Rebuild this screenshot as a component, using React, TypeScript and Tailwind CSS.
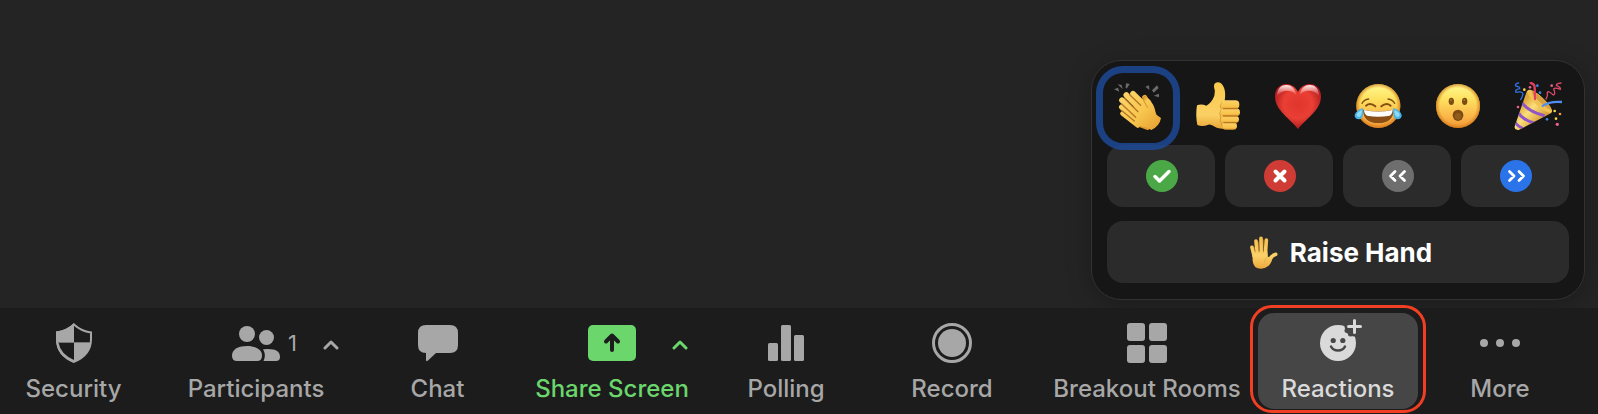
import type { ReactNode } from 'react';

/* ---------- Emoji drawings ---------- */

const EMOJI = 'h-[52px] w-12';

function Clap() {
  return (
    <svg viewBox="0 0 144 156" className={EMOJI} aria-hidden="true">
      <defs>
        <linearGradient id="clapSkin" x1="20" y1="40" x2="120" y2="140" gradientUnits="userSpaceOnUse">
          <stop offset="0" stopColor="#fbd46b" />
          <stop offset="0.55" stopColor="#f8c750" />
          <stop offset="1" stopColor="#e8a634" />
        </linearGradient>
      </defs>
      <g fill="#6b6b6b">
        <path d="M11 7l12 2 3 13z" />
        <path d="M36 4l11 2-9 14-3-4z" />
        <path d="M0 22l12-5 4 12z" />
        <path d="M94 14l11-4 1 14z" />
        <path d="M114 25l15-15 5 8-15 14z" />
        <path d="M119 41l16-6 0 11z" />
      </g>
      <g strokeLinecap="round" fill="none">
        <path d="M92 46l16 26 12 28" stroke="#e9a93a" strokeWidth="15" />
        <path d="M76 128l24 9" stroke="#dd9a2e" strokeWidth="14" />
        <g stroke="url(#clapSkin)">
          <path d="M57 35l52 52" strokeWidth="17" />
          <path d="M37 39l58 58" strokeWidth="17" />
          <path d="M24 55l58 58" strokeWidth="17" />
          <path d="M23 75l50 46" strokeWidth="16" />
          <path d="M25 95l46 36" strokeWidth="13" />
        </g>
      </g>
      <path d="M64 38L90 55 Q97 60 97 49 Q105 47 112 60 Q124 76 125 97 L141 108 Q137 132 112 144 L95 136 Q78 134 65 120 L55 96z" fill="url(#clapSkin)" />
      <path d="M94 44Q85 43 89 56L101 77" stroke="#d38f28" strokeWidth="3" fill="none" />
      <g stroke="#b67720" strokeWidth="4" strokeLinecap="round">
        <path d="M47 38l33 32" />
        <path d="M31 48l41 41" />
        <path d="M23 66l42 40" />
        <path d="M22 85l39 32" />
      </g>
    </svg>
  );
}

function ThumbsUp() {
  return (
    <svg viewBox="0 0 144 156" className={EMOJI} aria-hidden="true">
      <defs>
        <linearGradient id="thumbSkin" x1="0" y1="0" x2="0" y2="1">
          <stop offset="0" stopColor="#fac94d" />
          <stop offset="0.7" stopColor="#fbd064" />
          <stop offset="1" stopColor="#e9a536" />
        </linearGradient>
        <linearGradient id="thumbFinger" x1="0" y1="0" x2="0" y2="1">
          <stop offset="0" stopColor="#fcd168" />
          <stop offset="0.7" stopColor="#f8c34b" />
          <stop offset="1" stopColor="#dd992e" />
        </linearGradient>
      </defs>
      <path
        d="M9 70Q22 65 37 71Q54 61 61 41Q65 27 60 15Q59 2 71 1Q83 1 90 17Q96 31 92 56L108 60L106 141Q73 143 60 133Q50 126 43 128Q25 136 10 129Q4 100 9 70z"
        fill="url(#thumbSkin)"
      />
      <path d="M84 60Q76 73 82 83Q73 95 81 105Q75 117 83 125Q83 135 90 142" fill="none" stroke="#d49632" strokeWidth="3" />
      <g fill="url(#thumbFinger)">
        <rect x="82" y="55" width="54" height="26" rx="12" />
        <rect x="80" y="79" width="58" height="24" rx="12" />
        <rect x="82" y="101" width="53" height="22" rx="11" />
        <rect x="85" y="121" width="44" height="22" rx="11" />
      </g>
      <g fill="none" stroke="#b97820" strokeWidth="4" strokeLinecap="round">
        <path d="M88 80h42M88 102h42M90 122h36" />
      </g>
    </svg>
  );
}

function Heart() {
  return (
    <svg viewBox="0 0 144 156" className={EMOJI} aria-hidden="true">
      <defs>
        <radialGradient id="heartFill" cx="72" cy="66" r="80" gradientUnits="userSpaceOnUse">
          <stop offset="0" stopColor="#e0352d" />
          <stop offset="0.55" stopColor="#e93f34" />
          <stop offset="1" stopColor="#a8151b" />
        </radialGradient>
        <linearGradient id="heartShine" x1="0" y1="0" x2="0" y2="1">
          <stop offset="0" stopColor="#fff" stopOpacity="0.95" />
          <stop offset="1" stopColor="#ffaca6" stopOpacity="0.15" />
        </linearGradient>
      </defs>
      <path
        d="M72 141C52 113 3 87 3 43C3 20 18 6 37 6C54 6 66 17 72 30C78 17 90 6 107 6C126 6 141 20 141 43C141 87 92 113 72 141z"
        fill="url(#heartFill)"
      />
      <path d="M9 42C9 18 23 9 37 9C53 9 62 19 67 38C52 22 24 22 9 42z" fill="url(#heartShine)" />
      <path d="M135 42C135 18 121 9 107 9C91 9 82 19 77 38C92 22 120 22 135 42z" fill="url(#heartShine)" />
    </svg>
  );
}

function FaceGradients({ id }: { id: string }) {
  return (
    <defs>
      <linearGradient id={id} x1="0" y1="0" x2="0" y2="1">
        <stop offset="0" stopColor="#fffa90" />
        <stop offset="0.35" stopColor="#fee05f" />
        <stop offset="0.75" stopColor="#fab548" />
        <stop offset="1" stopColor="#ef9636" />
      </linearGradient>
      <radialGradient id={`${id}Edge`}>
        <stop offset="0.82" stopColor="#d87918" stopOpacity="0" />
        <stop offset="1" stopColor="#c9700f" stopOpacity="0.7" />
      </radialGradient>
    </defs>
  );
}

function Joy() {
  return (
    <svg viewBox="0 0 144 156" className={EMOJI} aria-hidden="true">
      <FaceGradients id="joyFace" />
      <circle cx="73" cy="72" r="66" fill="url(#joyFace)" />
      <circle cx="73" cy="72" r="66" fill="url(#joyFaceEdge)" />
      <g fill="none" stroke="#835014" strokeLinecap="round">
        <path d="M24 64Q30 53 44 51M102 51Q116 53 122 64" strokeWidth="4" />
        <path d="M36 71Q49 60 64 73M82 73Q97 60 110 71" strokeWidth="6" />
      </g>
      <path d="M27 83Q73 92 119 83Q118 123 73 123Q28 123 27 83z" fill="#8a4f14" />
      <path d="M30 84Q73 93 116 84Q115 97 107 101Q73 107 39 101Q31 97 30 84z" fill="#fff" />
      <path d="M27 78Q31 112 15 112Q1 111 2 99Q6 85 27 78z" fill="#4bb2e8" />
      <path d="M24 83Q24 102 15 105Q7 104 8 97Q12 88 24 83z" fill="#8cdcf8" />
      <path d="M118 78Q114 112 130 112Q144 111 143 99Q139 85 118 78z" fill="#4bb2e8" />
      <path d="M121 83Q121 102 130 105Q138 104 137 97Q133 88 121 83z" fill="#8cdcf8" />
    </svg>
  );
}

function Wow() {
  return (
    <svg viewBox="0 0 144 156" className={EMOJI} aria-hidden="true">
      <FaceGradients id="wowFace" />
      <circle cx="72" cy="72" r="66" fill="url(#wowFace)" />
      <circle cx="72" cy="72" r="66" fill="url(#wowFaceEdge)" />
      <g fill="#7b4b12">
        <ellipse cx="52" cy="58" rx="8" ry="11" />
        <ellipse cx="92" cy="58" rx="8" ry="11" />
        <ellipse cx="72" cy="100" rx="16" ry="17" />
      </g>
      <ellipse cx="72" cy="103" rx="10" ry="10" fill="#8f5d1b" />
      <g fill="#a9763a">
        <circle cx="51" cy="54" r="3" />
        <circle cx="91" cy="54" r="3" />
      </g>
    </svg>
  );
}

function Party() {
  return (
    <svg viewBox="0 0 144 156" className={EMOJI} aria-hidden="true">
      <defs>
        <linearGradient id="cone" x1="14" y1="76" x2="72" y2="128" gradientUnits="userSpaceOnUse">
          <stop offset="0" stopColor="#dfa83a" />
          <stop offset="0.4" stopColor="#fbdf7c" />
          <stop offset="1" stopColor="#d69c34" />
        </linearGradient>
        <clipPath id="coneShape">
          <path d="M39 26L1 136Q4 147 16 143L112 93Q92 82 78 60z" />
        </clipPath>
      </defs>
      <g clipPath="url(#coneShape)">
        <rect width="144" height="156" fill="url(#cone)" />
        <g fill="none" stroke="#9155c6" strokeWidth="9">
          <path d="M22 58Q38 88 92 101" />
          <path d="M10 88Q24 114 64 124" />
          <path d="M0 116Q8 132 28 140" />
        </g>
      </g>
      <ellipse cx="77" cy="58" rx="49" ry="14" transform="rotate(43 77 58)" fill="#f0c253" />
      <ellipse cx="82" cy="55" rx="39" ry="7" transform="rotate(43 82 55)" fill="#d9a040" />
      <g fill="none" strokeLinecap="round">
        <path d="M14 3Q2 5 5 12Q19 14 17 20Q1 23 6 31Q27 27 27 36Q25 45 20 53" stroke="#2f6fe0" strokeWidth="4" />
        <path d="M50 3Q62 5 62 17L63 51" stroke="#e0405e" strokeWidth="7" />
        <path d="M141 3Q126 5 127 10Q142 17 139 22Q122 16 119 21Q126 38 118 39Q103 25 100 31Q102 43 96 51" stroke="#e0486a" strokeWidth="4" />
        <path d="M84 73Q105 57 144 60" stroke="#4d8ef0" strokeWidth="7" strokeLinecap="butt" />
      </g>
      <g fill="#ee5f8b">
        <circle cx="48" cy="16" r="4" />
        <circle cx="113" cy="11" r="4" />
        <circle cx="12" cy="75" r="4" />
        <circle cx="130" cy="127" r="5" />
      </g>
      <g fill="#3c82ee">
        <circle cx="70" cy="11" r="4" />
        <circle cx="78" cy="32" r="4" />
        <circle cx="99" cy="112" r="4" />
      </g>
      <g fill="#f7d64a">
        <circle cx="31" cy="23" r="4" />
        <circle cx="122" cy="87" r="4" />
        <circle cx="126" cy="110" r="4" />
      </g>
      <circle cx="138" cy="96" r="4" fill="#f09a3c" />
    </svg>
  );
}

function RaisedHand() {
  return (
    <svg viewBox="0 0 84 99" className="h-[33px] w-7" aria-hidden="true">
      <defs>
        <linearGradient id="handSkin" x1="0" y1="0" x2="0" y2="99" gradientUnits="userSpaceOnUse">
          <stop offset="0" stopColor="#f5bd4a" />
          <stop offset="0.6" stopColor="#fbd168" />
          <stop offset="1" stopColor="#eca63a" />
        </linearGradient>
      </defs>
      <g stroke="url(#handSkin)" strokeWidth="11" strokeLinecap="round" fill="none">
        <path d="M6 34L13 62" />
        <path d="M18 15L22 56" />
        <path d="M33 7L34 54" />
        <path d="M49 12L46 56" />
        <path d="M77 55Q66 58 59 71L52 82" />
      </g>
      <path d="M7 48L16 46L52 46L54 63Q60 64 68 58L66 72Q58 98 33 98Q10 98 8 74z" fill="url(#handSkin)" />
      <g stroke="#c78527" strokeWidth="2" strokeLinecap="round" fill="none">
        <path d="M13 34L16 48M25 18L27 48M40 12L40 48" />
        <path d="M54 62Q45 66 43 78" strokeOpacity="0.5" />
      </g>
    </svg>
  );
}

/* ---------- Toolbar icons ---------- */

function SecurityIcon() {
  return (
    <svg viewBox="0 0 36 40" className="h-10 w-9" fill="currentColor" aria-hidden="true">
      <path d="M18 0Q11 7 0 8.500V16Q0 33 18 40z" />
      <path
        d="M18 1.400Q25 8 35 9.400V16Q35 32 18 38.800Q1 32 1 16V9.400Q11 8 18 1.400z"
        fill="none"
        stroke="currentColor"
        strokeWidth="2"
      />
      <path d="M2.600 20H18V37Q4.500 31 2.600 20z" fill="#1c1c1c" />
      <path d="M18 19.500H35Q33.500 33 18 39z" />
      <path d="M2 19.500H34" stroke="#777" strokeWidth="1" />
    </svg>
  );
}

function ParticipantsIcon() {
  return (
    <svg viewBox="0 0 48 40" className="h-10 w-12" fill="currentColor" aria-hidden="true">
      <circle cx="15" cy="11" r="8" />
      <circle cx="34.500" cy="14.500" r="7.500" />
      <path d="M0 32.500C0 26 7 23 15 23S30 26 30 32.500Q30 38 25 38H5Q0 38 0 32.500z" />
      <path d="M31 26.300Q48 24.500 48 34Q48 38 44 38H31.500Q34.500 32 31 26.300z" />
    </svg>
  );
}

function ChatIcon() {
  return (
    <svg viewBox="0 0 40 40" className="size-10" fill="currentColor" aria-hidden="true">
      <path d="M8 2H32Q40 2 40 10V22Q40 30 32 30H18L10 37.500Q8 39 8 37V30Q0 30 0 22V10Q0 2 8 2z" />
    </svg>
  );
}

function ShareIcon() {
  return (
    <svg viewBox="0 0 48 40" className="h-10 w-12" aria-hidden="true">
      <rect y="2" width="48" height="36" rx="5" fill="currentColor" />
      <path
        d="M24 27V12.500M18 18.500L24 12.500L30 18.500"
        fill="none"
        stroke="#1c1c1c"
        strokeWidth="4"
        strokeLinecap="round"
        strokeLinejoin="round"
      />
    </svg>
  );
}

function PollingIcon() {
  return (
    <svg viewBox="0 0 36 40" className="h-10 w-9" fill="currentColor" aria-hidden="true">
      <rect y="20" width="10" height="18" rx="1.500" />
      <rect x="13" y="2" width="10" height="36" rx="1.500" />
      <rect x="26" y="12" width="10" height="26" rx="1.500" />
    </svg>
  );
}

function RecordIcon() {
  return (
    <svg viewBox="0 0 40 40" className="size-10" fill="currentColor" aria-hidden="true">
      <circle cx="20" cy="20" r="18.500" fill="none" stroke="currentColor" strokeWidth="3" />
      <circle cx="20" cy="20" r="14" />
    </svg>
  );
}

function BreakoutIcon() {
  return (
    <svg viewBox="0 0 40 40" className="size-10" fill="currentColor" aria-hidden="true">
      <rect width="18" height="18" rx="3" />
      <rect x="22" width="18" height="18" rx="3" />
      <rect y="22" width="18" height="18" rx="3" />
      <rect x="22" y="22" width="18" height="18" rx="3" />
    </svg>
  );
}

function ReactionsIcon() {
  return (
    <svg viewBox="0 0 36 40" className="h-10 w-9 overflow-visible" fill="none" strokeLinecap="round" aria-hidden="true">
      <circle cx="18" cy="20" r="18" fill="currentColor" />
      <circle cx="34.500" cy="3.500" r="10" fill="#464646" />
      <circle cx="27" cy="7.500" r="2.500" fill="#464646" />
      <circle cx="30.500" cy="11" r="2.500" fill="#464646" />
      <path d="M34.500 -2.500V9.500M28.500 3.500H40.500" stroke="currentColor" strokeWidth="3" />
      <circle cx="13.200" cy="17.500" r="2.600" fill="#464646" />
      <circle cx="22.800" cy="17.500" r="2.600" fill="#464646" />
      <path d="M11 23.500Q13 27.500 18 27.500T25 23.500" stroke="#464646" strokeWidth="2.500" />
    </svg>
  );
}

function MoreIcon() {
  return (
    <svg viewBox="0 0 40 40" className="size-10" fill="currentColor" aria-hidden="true">
      <circle cx="4" cy="20" r="4" />
      <circle cx="20" cy="20" r="4" />
      <circle cx="36" cy="20" r="4" />
    </svg>
  );
}

/* ---------- Feedback badges ---------- */

function Badge({ fill, path, width }: { fill: string; path: string; width: number }) {
  return (
    <svg viewBox="0 0 32 32" className="size-8" aria-hidden="true">
      <circle cx="16" cy="16" r="16" fill={fill} />
      <path d={path} fill="none" stroke="#fff" strokeWidth={width} strokeLinecap="round" strokeLinejoin="round" />
    </svg>
  );
}

const reactions = [
  { name: 'Clap', icon: <Clap />, focused: true },
  { name: 'Thumbs up', icon: <ThumbsUp /> },
  { name: 'Heart', icon: <Heart /> },
  { name: 'Joy', icon: <Joy /> },
  { name: 'Open mouth', icon: <Wow /> },
  { name: 'Tada', icon: <Party /> },
];

const feedback = [
  { name: 'Yes', fill: '#4ba846', path: 'M9 16.500L13.500 21L23 11.500', width: 3.5 },
  { name: 'No', fill: '#cf3b35', path: 'M11.500 11.500L20.500 20.500M20.500 11.500L11.500 20.500', width: 4 },
  { name: 'Slow down', fill: '#6e6e6e', path: 'M13 11.500L8.500 16L13 20.500M22.500 11.500L18 16L22.500 20.500', width: 2.8 },
  { name: 'Speed up', fill: '#2a73e8', path: 'M9.500 11.500L14 16L9.500 20.500M19 11.500L23.500 16L19 20.500', width: 2.8 },
];

function ReactionsPanel() {
  return (
    <section
      aria-label="Reactions"
      className="w-[494px] rounded-[30px] border border-[#323232] bg-[#161616] px-[15px] pt-3 pb-4 shadow-[0_4px_24px_rgba(0,0,0,0.25)]"
    >
      <div className="-mx-1 flex justify-between">
        {reactions.map((r) => (
          <button
            key={r.name}
            type="button"
            aria-label={r.name}
            className={
              r.focused
                ? 'relative z-10 flex size-[70px] items-center justify-center rounded-[20px] ring-[7px] ring-[#1d4c9f]/80 outline-none'
                : 'flex size-[70px] items-center justify-center rounded-[20px]'
            }
          >
            {r.icon}
          </button>
        ))}
      </div>
      <div className="mt-0.5 grid grid-cols-4 gap-2.5">
        {feedback.map((f) => (
          <button
            key={f.name}
            type="button"
            aria-label={f.name}
            className="flex h-[62px] items-center justify-center rounded-2xl bg-[#2b2b2b] pl-0.5"
          >
            <Badge fill={f.fill} path={f.path} width={f.width} />
          </button>
        ))}
      </div>
      <button
        type="button"
        className="mt-3.5 flex h-[62px] w-full items-center justify-center gap-3 rounded-2xl bg-[#2b2b2b] pl-1.5 text-[26px] font-bold text-white"
      >
        <RaisedHand />
        Raise Hand
      </button>
    </section>
  );
}

type ItemProps = {
  label: string;
  icon: ReactNode;
  count?: number;
  menu?: string;
  tone?: string;
};

function ToolbarItem({ label, icon, count, menu, tone = 'text-[#a7a7a7]' }: ItemProps) {
  return (
    <div className={`grid ${tone}`}>
      <button type="button" className="col-start-1 row-start-1 flex flex-col items-center gap-2 rounded-2xl pt-2.5">
        <span className="grid w-full grid-cols-[1fr_auto_1fr] items-center">
          <span />
          {icon}
          {count !== undefined && <span className="pl-2 text-left text-[22px] leading-10">{count}</span>}
        </span>
        <span className="text-2xl leading-9 font-medium whitespace-nowrap">{label}</span>
      </button>
      {menu && (
        <button
          type="button"
          aria-label={menu}
          className="col-start-1 row-start-1 mt-5 mr-3 flex size-6 items-center justify-center self-start justify-self-end"
        >
          <svg
            viewBox="0 0 16 10"
            className="h-2.5 w-4"
            fill="none"
            stroke="currentColor"
            strokeWidth="3"
            strokeLinecap="round"
            strokeLinejoin="round"
            aria-hidden="true"
          >
            <path d="M2 8L8 2L14 8" />
          </svg>
        </button>
      )}
    </div>
  );
}

export default function App() {
  return (
    <div className="flex min-h-screen flex-col bg-[#242424] font-['Inter','Liberation_Sans',sans-serif]">
      <main className="flex flex-1 items-end justify-end pr-[13px] pb-2">
        <ReactionsPanel />
      </main>
      <nav
        aria-label="Meeting controls"
        className="grid grid-cols-[157fr_198fr_165fr_184fr_164fr_168fr_222fr_160fr_164fr] bg-[#1c1c1c] py-[5px] pr-4"
      >
        <div className="grid pr-2.5">
          <ToolbarItem label="Security" icon={<SecurityIcon />} />
        </div>
        <ToolbarItem label="Participants" icon={<ParticipantsIcon />} count={1} menu="Participant options" />
        <ToolbarItem label="Chat" icon={<ChatIcon />} />
        <ToolbarItem label="Share Screen" icon={<ShareIcon />} menu="Share options" tone="text-[#6ad66c]" />
        <ToolbarItem label="Polling" icon={<PollingIcon />} />
        <ToolbarItem label="Record" icon={<RecordIcon />} />
        <ToolbarItem label="Breakout Rooms" icon={<BreakoutIcon />} />
        <div className="relative grid">
          <ToolbarItem label="Reactions" icon={<ReactionsIcon />} tone="h-24 rounded-2xl bg-[#464646] text-[#dadada]" />
          <span className="pointer-events-none absolute -inset-x-2 -top-2 -bottom-1 rounded-[22px] border-3 border-[#f03f22]" />
        </div>
        <ToolbarItem label="More" icon={<MoreIcon />} />
      </nav>
    </div>
  );
}
